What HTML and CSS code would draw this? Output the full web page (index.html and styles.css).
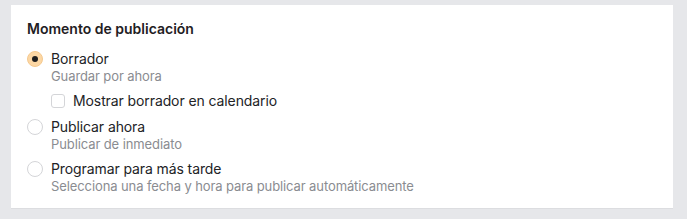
FILE: index.html
```html
<!DOCTYPE html>
<html lang="es">
<head>
<meta charset="utf-8">
<link rel="stylesheet" href="styles.css">
</head>
<body>
<section class="card">
  <h2 class="title">Momento de publicación</h2>
  <div class="options">
    <label class="option">
      <span class="radio checked"><span class="dot"></span></span>
      <span class="text">
        <span class="label">Borrador</span>
        <span class="hint">Guardar por ahora</span>
      </span>
    </label>
    <label class="check-row">
      <span class="checkbox"></span>
      <span class="label">Mostrar borrador en calendario</span>
    </label>
    <label class="option">
      <span class="radio"></span>
      <span class="text">
        <span class="label">Publicar ahora</span>
        <span class="hint">Publicar de inmediato</span>
      </span>
    </label>
    <label class="option">
      <span class="radio"></span>
      <span class="text">
        <span class="label">Programar para más tarde</span>
        <span class="hint">Selecciona una fecha y hora para publicar automáticamente</span>
      </span>
    </label>
  </div>
</section>
</body>
</html>
```

FILE: styles.css
```css
html, body {
  margin: 0;
  padding: 0;
}
body {
  background: #e6e7ea;
  font-family: Inter, "Noto Sans", sans-serif;
  padding: 5px 14px 10px 11px;
}
.card {
  background: #ffffff;
  border-bottom: 1px solid #dcdde0;
  padding: 14px 16px 14px 16px;
}
.title {
  margin: 0 0 11px 0;
  font-size: 14px;
  font-weight: 600;
  line-height: 20px;
  color: #1f2023;
}
.options {
  display: flex;
  flex-direction: column;
  gap: 8px;
}
.option {
  display: flex;
  align-items: flex-start;
  gap: 8px;
}
.radio {
  flex: none;
  width: 14px;
  height: 14px;
  border: 1px solid #d4d5d8;
  border-radius: 50%;
  margin-top: 1px;
  display: flex;
  align-items: center;
  justify-content: center;
  background: #fff;
}
.radio.checked {
  background: #fcd7a4;
  border-color: #f5c98f;
}
.dot {
  width: 6px;
  height: 6px;
  border-radius: 50%;
  background: #1e1e1e;
}
.text {
  display: flex;
  flex-direction: column;
}
.label {
  font-size: 14px;
  line-height: 18px;
  letter-spacing: -0.1px;
  color: #222326;
}
.hint {
  font-size: 13px;
  line-height: 16px;
  letter-spacing: -0.1px;
  color: #8a8c91;
}
.check-row {
  display: flex;
  align-items: center;
  gap: 8px;
  padding-left: 24px;
}
.checkbox {
  flex: none;
  width: 12px;
  height: 12px;
  border: 1px solid #d4d5d8;
  border-radius: 3px;
  background: #fff;
}
```
